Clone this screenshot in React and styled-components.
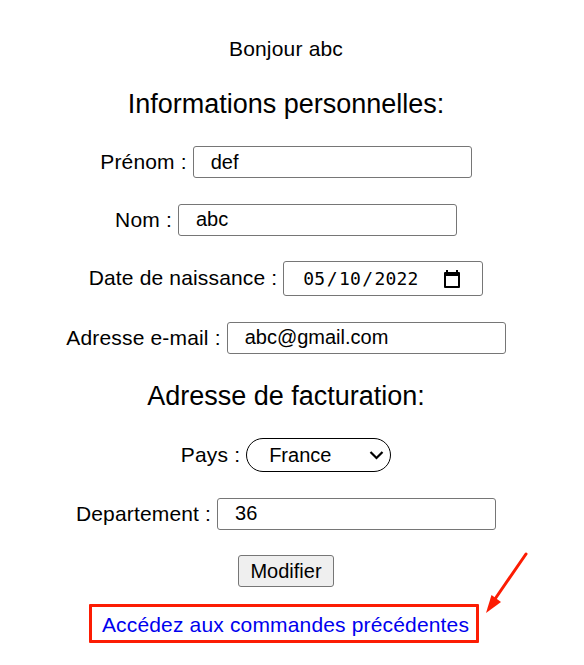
import React from "react";
import styled, { createGlobalStyle } from "styled-components";

const GlobalStyle = createGlobalStyle`
  *, *::before, *::after { box-sizing: border-box; }
  body {
    margin: 0;
    background: #fff;
    color: #000;
    font-family: "Liberation Sans", Arial, sans-serif;
    font-size: 20px;
  }
`;

const Page = styled.main`
  position: relative;
  width: 584px;
  height: 665px;
  padding: 37px 12px 0 0;
  display: flex;
  flex-direction: column;
  align-items: center;
  overflow: hidden;
`;

const Greeting = styled.p`
  margin: 0;
  height: 24px;
  font-size: 21px;
  line-height: 24px;
  letter-spacing: 0.18px;
  white-space: nowrap;
`;

const Heading = styled.h2`
  margin: ${(p) => p.$top}px 0 0;
  height: 32px;
  font-size: 27px;
  font-weight: 400;
  line-height: 32px;
  white-space: nowrap;
`;

const Row = styled.div`
  display: flex;
  align-items: center;
  height: ${(p) => p.$height || 32}px;
  margin-top: ${(p) => p.$top}px;
`;

const Label = styled.label`
  font-size: 21px;
  line-height: 24px;
  letter-spacing: 0.16px;
  margin-right: 6px;
  white-space: nowrap;
`;

const DateLabel = styled(Label)`
  margin-bottom: 2px;
`;

const TextInput = styled.input`
  width: 279px;
  height: 32px;
  padding: ${(p) => (p.$lowered ? "0 17px" : "0 17px 2px")};
  border: 1px solid #767676;
  border-radius: 3px;
  outline: none;
  background: #fff;
  color: #000;
  font: 20px "Liberation Sans", Arial, sans-serif;
`;

const DateField = styled.div`
  display: flex;
  align-items: center;
  justify-content: space-between;
  width: 200px;
  height: 35px;
  padding: 1px 21px 0 19px;
  border: 1px solid #767676;
  border-radius: 3px;
`;

const DateText = styled.span`
  display: flex;
  gap: 1.3px;
  font: 18px/22px "DejaVu Sans Mono", monospace;
  letter-spacing: 0.16px;
`;

const SelectField = styled.div`
  display: flex;
  align-items: center;
  justify-content: space-between;
  width: 145px;
  height: 34px;
  padding: 0 6px 0 22px;
  border: 1px solid #000;
  border-radius: 17px;
  font-size: 20px;
`;

const Submit = styled.button`
  width: 96px;
  height: 32px;
  margin-top: 25px;
  padding: 0;
  border: 1px solid #767676;
  border-radius: 3px;
  background: #efefef;
  color: #000;
  font: 20px "Liberation Sans", Arial, sans-serif;
`;

const OrdersLink = styled.a`
  display: flex;
  align-items: center;
  justify-content: center;
  width: 390px;
  height: 39px;
  margin: 17px 0 0 -5px;
  padding: 2px 0 0 4px;
  border: 3px solid #fc1c03;
  border-radius: 1px;
  color: #0000ee;
  font-size: 21px;
  letter-spacing: 0.16px;
  text-decoration: none;
  white-space: nowrap;
`;

const Arrow = styled.svg`
  position: absolute;
  left: 480px;
  top: 548px;
`;

function CalendarIcon() {
  return (
    <svg width="18" height="20" viewBox="0 0 18 20">
      <path fill="#000" fillRule="evenodd" d="M3 1h2v2h8V1h2v2h1a1 1 0 0 1 1 1v14a1 1 0 0 1-1 1H2a1 1 0 0 1-1-1V4a1 1 0 0 1 1-1h1zM3 7v10h12V7z" />
    </svg>
  );
}

function ChevronIcon() {
  return (
    <svg width="15" height="10" viewBox="0 0 15 10">
      <path d="M1.5 2 7.5 8 13.5 2" fill="none" stroke="#000" strokeWidth="2.2" />
    </svg>
  );
}

function TextRow({ id, label, value, top, lowered }) {
  return (
    <Row $top={top}>
      <Label htmlFor={id}>{label} :</Label>
      <TextInput id={id} defaultValue={value} spellCheck={false} $lowered={lowered} />
    </Row>
  );
}

export default function App() {
  return (
    <>
      <GlobalStyle />
      <Page>
        <Greeting>Bonjour abc</Greeting>
        <Heading $top={27}>Informations personnelles:</Heading>
        <TextRow id="firstName" label="Prénom" value="def" top={26} lowered />
        <TextRow id="lastName" label="Nom" value="abc" top={26} />
        <Row $top={25} $height={35}>
          <DateLabel>Date de naissance :</DateLabel>
          <DateField>
            <DateText>
              <span>05</span>
              <span>/</span>
              <span>10</span>
              <span>/</span>
              <span>2022</span>
            </DateText>
            <CalendarIcon />
          </DateField>
        </Row>
        <TextRow id="email" label="Adresse e-mail" value="abc@gmail.com" top={26} />
        <Heading $top={26}>Adresse de facturation:</Heading>
        <Row $top={26} $height={34}>
          <Label>Pays :</Label>
          <SelectField>
            France
            <ChevronIcon />
          </SelectField>
        </Row>
        <TextRow id="department" label="Departement" value="36" top={26} />
        <Submit type="button">Modifier</Submit>
        <OrdersLink href="#">Accédez aux commandes précédentes</OrdersLink>
        <Arrow width="54" height="70" viewBox="0 0 54 70">
          <path d="M46 6 15 51" stroke="#fc1c03" strokeWidth="3" strokeLinecap="round" />
          <path d="M6 65 11.5 47 21 54z" fill="#fc1c03" />
        </Arrow>
      </Page>
    </>
  );
}
